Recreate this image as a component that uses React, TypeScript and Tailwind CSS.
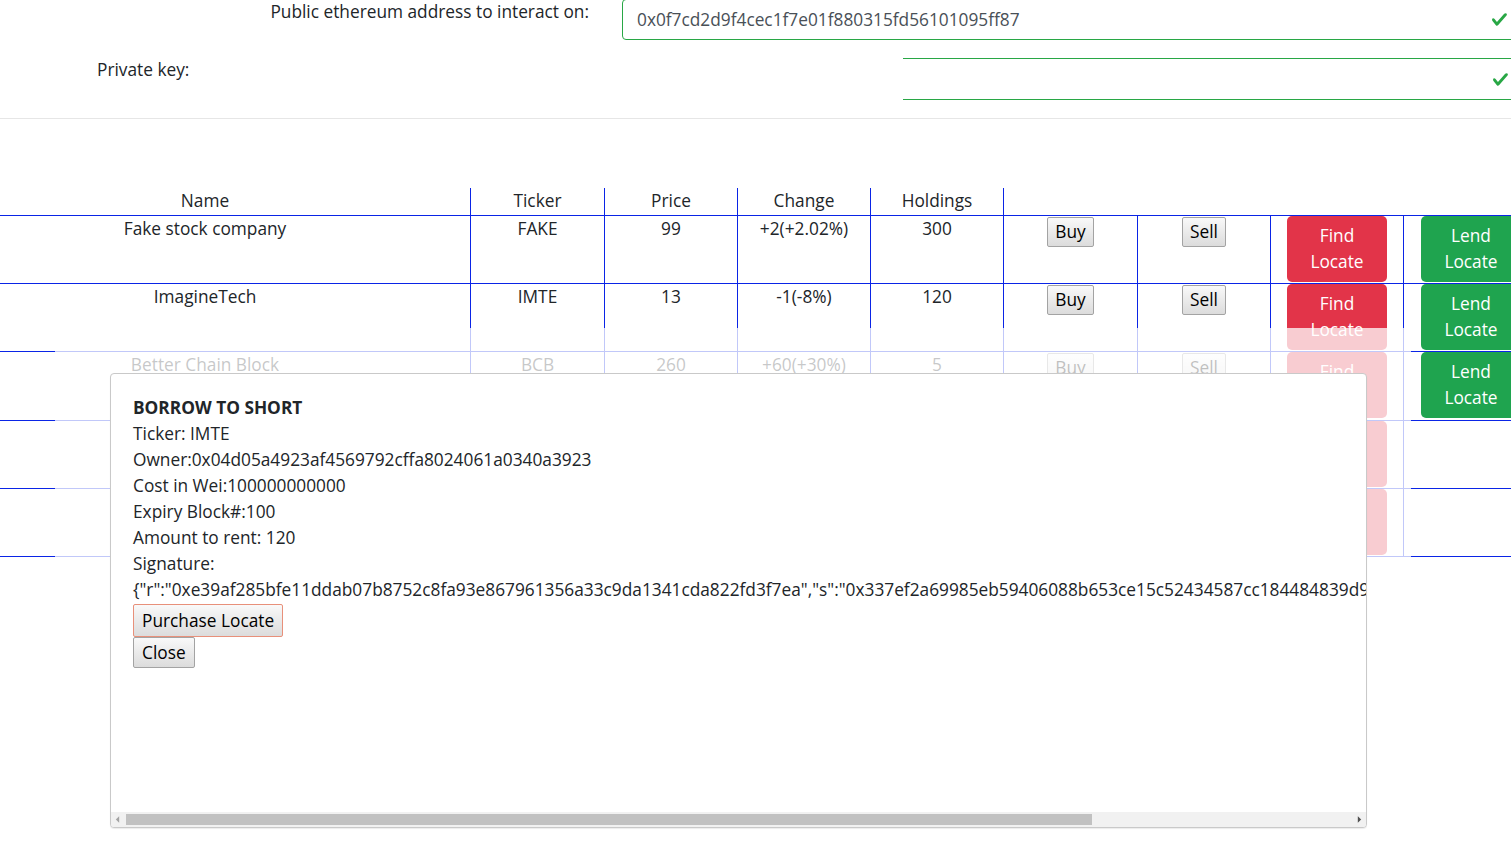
import React from "react";

const BLUE = "border-[#0a24e6]";

function Check() {
  return (
    <svg viewBox="0 0 8 8" className="w-[17px] h-[17px]">
      <path
        fill="#28a745"
        d="M2.3 6.73L.6 4.53c-.4-1.04.46-1.4 1.1-.8l1.1 1.4 3.4-3.8c.6-.63 1.6-.27 1.2.7l-4 4.6c-.43.5-.8.4-1.1.1z"
      />
    </svg>
  );
}

function GrayBtn({ children, className = "" }: { children: React.ReactNode; className?: string }) {
  return (
    <button
      className={
        "inline-flex items-center justify-center h-[30px] px-[7px] border border-[#a3a3a3] rounded-[2px] bg-gradient-to-b from-[#f9f9f9] to-[#dcdcdc] text-black leading-[26px] " +
        className
      }
    >
      {children}
    </button>
  );
}

function ColorBtn({ label, color }: { label: string; color: string }) {
  return (
    <button
      className={
        "mx-auto flex items-center justify-center w-[100px] h-[66px] rounded-[5px] text-white leading-[26px] text-center px-[12px] " +
        color
      }
    >
      {label}
    </button>
  );
}

const widths = [531, 134, 133, 133, 133, 134, 133, 133, 134];

type Row = {
  name: string;
  ticker: string;
  price: string;
  change: string;
  holdings: string;
  trade: boolean;
  lend: boolean;
};

const rows: Row[] = [
  { name: "Fake stock company", ticker: "FAKE", price: "99", change: "+2(+2.02%)", holdings: "300", trade: true, lend: true },
  { name: "ImagineTech", ticker: "IMTE", price: "13", change: "-1(-8%)", holdings: "120", trade: true, lend: true },
  { name: "Better Chain Block", ticker: "BCB", price: "260", change: "+60(+30%)", holdings: "5", trade: true, lend: true },
  { name: "", ticker: "", price: "", change: "", holdings: "", trade: false, lend: false },
  { name: "", ticker: "", price: "", change: "", holdings: "", trade: false, lend: false },
];

export default function App() {
  const headers = ["Name", "Ticker", "Price", "Change", "Holdings", "", "", "", ""];
  return (
    <div
      className="relative w-[1511px] h-[862px] overflow-hidden bg-white text-[#212529] text-[17.3px] leading-[26px]"
      style={{ fontFamily: '"Open Sans", "Noto Sans", sans-serif' }}
    >
      {/* Address row */}
      <div className="flex items-start h-[40px]">
        <div className="w-[589px] text-right -mt-[1px] shrink-0">Public ethereum address to interact on:</div>
        <div className="ml-[33px] -mt-[1px] h-[41px] w-[896px] shrink-0 border border-[#28a745] rounded-[4px] flex items-center justify-between pl-[14px] pr-[9px] text-[#495057]">
          <span>0x0f7cd2d9f4cec1f7e01f880315fd56101095ff87</span>
          <Check />
        </div>
      </div>
      {/* Private key row */}
      <div className="flex items-start mt-[18px] h-[42px]">
        <div className="w-[903px] shrink-0 pl-[97px] -mt-[1px]">Private key:</div>
        <div className="h-[42px] w-[615px] shrink-0 border-t border-b border-[#28a745] flex items-center justify-end pr-[9px]">
          <Check />
        </div>
      </div>
      <div className="mt-[18px] border-t border-[#e6e6e6]" />

      {/* Table */}
      <div className="mt-[69px] -ml-[60px] w-[1598px]">
        <div className={"flex h-[28px] border-b " + BLUE}>
          {headers.map((h, i) => (
            <div
              key={i}
              style={{ width: widths[i] }}
              className={"shrink-0 text-center " + (i < 5 ? "border-r " + BLUE : "")}
            >
              {h}
            </div>
          ))}
        </div>
        {rows.map((r, ri) => {
          const cells: React.ReactNode[] = [
            r.name,
            r.ticker,
            r.price,
            r.change,
            r.holdings,
            r.trade ? <GrayBtn className="mt-px">Buy</GrayBtn> : null,
            r.trade ? <GrayBtn className="mt-px">Sell</GrayBtn> : null,
            <ColorBtn label="Find Locate" color="bg-[#e23449]" />,
            r.lend ? <ColorBtn label="Lend Locate" color="bg-[#1fa44f]" /> : null,
          ];
          return (
            <div key={ri} className={"flex h-[68.2px] border-b " + BLUE}>
              {cells.map((c, i) => (
                <div
                  key={i}
                  style={{ width: widths[i] }}
                  className={"shrink-0 text-center " + (i < 8 ? "border-r " + BLUE : "")}
                >
                  {c}
                </div>
              ))}
            </div>
          );
        })}
      </div>

      {/* Backdrop + modal */}
      <div className="absolute left-[55px] top-[328px] w-[1356px] h-[534px] bg-white/75">
        <div className="ml-[55px] mt-[45px] w-[1257px] h-[455px] bg-white border border-[#c9c9c9] rounded-[4px] flex flex-col overflow-hidden shadow-[0_1px_1px_rgba(0,0,0,0.08)]">
          <div className="flex-1 min-h-0 overflow-hidden pl-[22px] pt-[21px] whitespace-nowrap">
            <div className="font-bold">BORROW TO SHORT</div>
            <div>Ticker: IMTE</div>
            <div>Owner:0x04d05a4923af4569792cffa8024061a0340a3923</div>
            <div>Cost in Wei:100000000000</div>
            <div>Expiry Block#:100</div>
            <div>Amount to rent: 120</div>
            <div>Signature:</div>
            <div>
              {'{"r":"0xe39af285bfe11ddab07b8752c8fa93e867961356a33c9da1341cda822fd3f7ea","s":"0x337ef2a69985eb59406088b653ce15c52434587cc184484839d9a1c3e5b7f20d","v":28}'}
            </div>
            <div className="flex flex-col items-start">
              <button className="mt-px h-[33px] px-[8px] border border-[#e8907a] rounded-[2px] bg-gradient-to-b from-[#f9f9f9] to-[#dcdcdc] text-black leading-[26px]">
                Purchase Locate
              </button>
              <button className="h-[31px] px-[8px] border border-[#a3a3a3] rounded-[2px] bg-gradient-to-b from-[#f9f9f9] to-[#dcdcdc] text-black leading-[26px]">
                Close
              </button>
            </div>
          </div>
          {/* horizontal scrollbar */}
          <div className="relative h-[15px] bg-[#f1f1f1] shrink-0">
            <svg viewBox="0 0 6 8" className="absolute left-[4px] top-[4px] w-[5px] h-[7px]">
              <path d="M5 0 L1 4 L5 8 Z" fill="#a3a3a3" />
            </svg>
            <div className="absolute left-[15px] top-[2px] w-[966px] h-[11px] bg-[#c1c1c1]" />
            <svg viewBox="0 0 6 8" className="absolute right-[4px] top-[4px] w-[5px] h-[7px]">
              <path d="M1 0 L5 4 L1 8 Z" fill="#505050" />
            </svg>
          </div>
        </div>
      </div>
    </div>
  );
}
